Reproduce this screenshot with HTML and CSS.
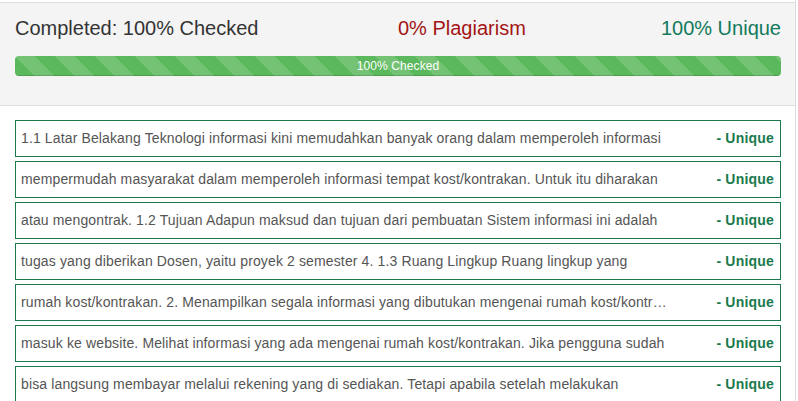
FILE: index.html
```html
<!DOCTYPE html>
<html>
<head>
<meta charset="utf-8">
<link rel="stylesheet" href="styles.css">
</head>
<body>
<div class="wrap">
  <div class="summary">
    <div class="stats">
      <div class="completed">Completed: 100% Checked</div>
      <div class="right-stats">
        <span class="plag">0% Plagiarism</span>
        <span class="unique">100% Unique</span>
      </div>
    </div>
    <div class="progress">
      <div class="progress-bar" style="width:100%">100% Checked</div>
    </div>
  </div>
  <ul class="results">
    <li class="row"><span class="txt">1.1 Latar Belakang Teknologi informasi kini memudahkan banyak orang dalam memperoleh informasi</span><span class="tag">- Unique</span></li>
    <li class="row"><span class="txt">mempermudah masyarakat dalam memperoleh informasi tempat kost/kontrakan. Untuk itu diharakan</span><span class="tag">- Unique</span></li>
    <li class="row"><span class="txt">atau mengontrak. 1.2 Tujuan Adapun maksud dan tujuan dari pembuatan Sistem informasi ini adalah</span><span class="tag">- Unique</span></li>
    <li class="row"><span class="txt">tugas yang diberikan Dosen, yaitu proyek 2 semester 4. 1.3 Ruang Lingkup Ruang lingkup yang</span><span class="tag">- Unique</span></li>
    <li class="row"><span class="txt">rumah kost/kontrakan. 2. Menampilkan segala informasi yang dibutukan mengenai rumah kost/kontrakan dengan lengkap</span><span class="tag">- Unique</span></li>
    <li class="row"><span class="txt">masuk ke website. Melihat informasi yang ada mengenai rumah kost/kontrakan. Jika pengguna sudah</span><span class="tag">- Unique</span></li>
    <li class="row"><span class="txt">bisa langsung membayar melalui rekening yang di sediakan. Tetapi apabila setelah melakukan</span><span class="tag">- Unique</span></li>
  </ul>
</div>
</body>
</html>
```
FILE: styles.css
```css
html, body {
  margin: 0;
  padding: 0;
  background: #fff;
  font-family: "Liberation Sans", Arial, sans-serif;
}
.wrap {
  width: 795px;
  border-right: 1px solid #ddd;
  padding-top: 2px;
  min-height: 399px;
}
.summary {
  background: #f4f4f4;
  border-top: 1px solid #ddd;
  border-bottom: 1px solid #ddd;
  padding: 12px 14px 29px 15px;
}
.stats {
  display: grid;
  grid-template-columns: 1fr 1fr;
  font-size: 20px;
  line-height: 26px;
}
.completed { color: #333; }
.right-stats {
  display: flex;
  justify-content: space-between;
}
.plag { color: #a31515; }
.unique { color: #137a5c; }
.progress {
  margin-top: 15px;
  height: 20px;
  border-radius: 4px;
  background: #f5f5f5;
  overflow: hidden;
}
.progress-bar {
  height: 20px;
  line-height: 20px;
  font-size: 12px;
  letter-spacing: 0.1px;
  color: #fff;
  text-align: center;
  background-color: #5cb85c;
  background-image: linear-gradient(45deg, rgba(255,255,255,.15) 25%, transparent 25%, transparent 50%, rgba(255,255,255,.15) 50%, rgba(255,255,255,.15) 75%, transparent 75%, transparent);
  background-size: 40px 40px;
  box-shadow: inset 0 -1px 0 rgba(0,0,0,.15);
}
.results {
  list-style: none;
  margin: 14px 0 0 15px;
  padding: 0;
  width: 766px;
  display: flex;
  flex-direction: column;
  gap: 4px;
}
.row {
  display: flex;
  align-items: center;
  justify-content: space-between;
  border: 1px solid #1a7a4c;
  padding: 8px 6px 8px 5px;
  font-size: 14px;
  line-height: 19px;
}
.txt {
  color: #555;
  width: 650px;
  letter-spacing: 0.13px;
  white-space: nowrap;
  overflow: hidden;
  text-overflow: ellipsis;
}
.tag {
  color: #1a7a4c;
  font-weight: bold;
  letter-spacing: 0.2px;
}
```
